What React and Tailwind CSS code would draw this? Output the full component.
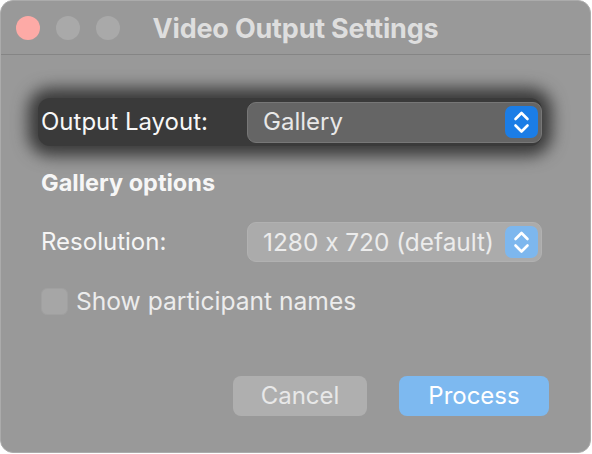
import React from "react";

function Stepper({ light }) {
  return (
    <div
      className={
        "w-[33px] h-[32px] rounded-[7px] flex items-center justify-center " +
        (light ? "bg-[#7db7ee]" : "bg-[#1b7de6]")
      }
    >
      <svg width="33" height="32" viewBox="0 0 33 32" fill="none">
        <path d="M10.5 13 L16.5 7 L22.5 13" stroke="#ffffff" strokeWidth="2.6" strokeLinecap="round" strokeLinejoin="round" />
        <path d="M10.5 19.5 L16.5 25.5 L22.5 19.5" stroke="#ffffff" strokeWidth="2.6" strokeLinecap="round" strokeLinejoin="round" />
      </svg>
    </div>
  );
}

export default function App() {
  return (
    <div
      className="w-[592px] h-[454px] bg-white [font-feature-settings:'calt'_0]"
      style={{ fontFamily: "Inter, 'Liberation Sans', sans-serif" }}
    >
      <div className="w-[591px] h-[453px] rounded-[13px] bg-[#999999] border border-[#ababab] overflow-hidden flex flex-col">
        <div className="h-[54px] shrink-0 border-b border-[#858585] grid grid-cols-[1fr_auto_1fr] items-center">
          <div className="flex items-center gap-[16px] pl-[15px]">
            <div className="w-[24px] h-[24px] rounded-full bg-[#fdaaa6]" />
            <div className="w-[24px] h-[24px] rounded-full bg-[#a9a9a9]" />
            <div className="w-[24px] h-[24px] rounded-full bg-[#a9a9a9]" />
          </div>
          <div className="text-[27px] font-bold text-[#dedede] leading-none pt-[1px] tracking-[-0.2px]">Video Output Settings</div>
          <div />
        </div>

        <div className="flex flex-col pl-[40px] pr-[48px] pt-[43px]">
          <div className="-ml-[3px] pl-[3px] h-[48px] flex items-center rounded-[12px] bg-[#3a3a3a] shadow-[0_0_16px_10px_#3a3a3a]">
            <div className="w-[206px] text-[24px] text-[#f7f7f7] leading-none">Output Layout:</div>
            <div className="flex-1 h-[41px] rounded-[9px] bg-[#656565] border border-[#777777] flex items-center justify-between pl-[15px] pr-[3px]">
              <span className="text-[24px] text-[#e8e8e8] leading-none">Gallery</span>
              <Stepper />
            </div>
          </div>

          <div className="mt-[23px] h-[28px] flex items-center text-[23.5px] font-bold text-[#f6f6f6]">Gallery options</div>

          <div className="mt-[25px] h-[40px] flex items-center">
            <div className="w-[206px] text-[24px] text-[#f5f5f5] leading-none">Resolution:</div>
            <div className="flex-1 h-[40px] rounded-[9px] bg-[#ababab] border border-[#b1b1b1] flex items-center justify-between pl-[15px] pr-[3px]">
              <span className="text-[24.4px] text-[#ececec] leading-none">1280 x 720 (default)</span>
              <Stepper light />
            </div>
          </div>

          <div className="mt-[25px] h-[28px] flex items-center gap-[8px]">
            <div className="w-[27px] h-[27px] rounded-[6px] bg-[#a6a6a6] border border-[#a0a0a0]" />
            <span className="text-[24.6px] text-[#ececec] leading-none">Show participant names</span>
          </div>

          <div className="mt-[61px] flex justify-end gap-[32px] -mr-[7px]">
            <div className="w-[134px] h-[40px] rounded-[8px] bg-[#afafaf] flex items-center justify-center text-[24px] text-[#e8e8e8]">Cancel</div>
            <div className="w-[150px] h-[40px] rounded-[8px] bg-[#7db9f0] flex items-center justify-center text-[24px] text-white">Process</div>
          </div>
        </div>
      </div>
    </div>
  );
}
